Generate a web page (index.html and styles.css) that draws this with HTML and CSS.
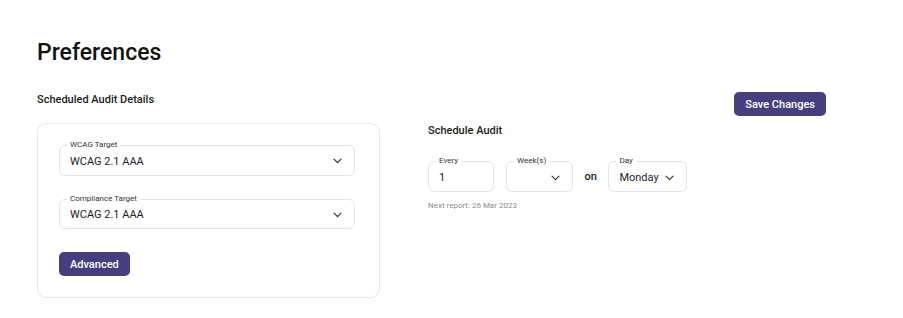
FILE: index.html
```html
<!DOCTYPE html>
<html lang="en">
  <head>
    <meta charset="UTF-8" />
    <meta name="viewport" content="width=device-width, initial-scale=1.0" />
    <link rel="stylesheet" href="styles.css">
  </head>
  <body>
    <div id="page">
      <h1 class="page-title">Preferences</h1>

      <div class="columns">
        <div class="col-left">
          <h2 class="section-title">Scheduled Audit Details</h2>
          <div class="card">
            <div class="field select-field wide">
              <span class="field-label">WCAG Target</span>
              <span class="field-value">WCAG 2.1 AAA</span>
              <svg class="chevron" width="9" height="6" viewBox="0 0 9 6"><path d="M1 1.2l3.5 3.5 3.5-3.5" fill="none" stroke="#333" stroke-width="1.2" stroke-linecap="round" stroke-linejoin="round"/></svg>
            </div>
            <div class="field select-field wide">
              <span class="field-label">Compliance Target</span>
              <span class="field-value">WCAG 2.1 AAA</span>
              <svg class="chevron" width="9" height="6" viewBox="0 0 9 6"><path d="M1 1.2l3.5 3.5 3.5-3.5" fill="none" stroke="#333" stroke-width="1.2" stroke-linecap="round" stroke-linejoin="round"/></svg>
            </div>
            <button class="btn">Advanced</button>
          </div>
        </div>

        <div class="col-right">
          <button class="btn save-btn">Save Changes</button>
          <h2 class="section-title schedule-title">Schedule Audit</h2>
          <div class="schedule-row">
            <div class="field every">
              <span class="field-label">Every</span>
              <span class="field-value">1</span>
            </div>
            <div class="field select-field weeks">
              <span class="field-label">Week(s)</span>
              <span class="field-value"></span>
              <svg class="chevron" width="9" height="6" viewBox="0 0 9 6"><path d="M1 1.2l3.5 3.5 3.5-3.5" fill="none" stroke="#333" stroke-width="1.2" stroke-linecap="round" stroke-linejoin="round"/></svg>
            </div>
            <span class="on-text">on</span>
            <div class="field select-field day">
              <span class="field-label">Day</span>
              <span class="field-value">Monday</span>
              <svg class="chevron" width="9" height="6" viewBox="0 0 9 6"><path d="M1 1.2l3.5 3.5 3.5-3.5" fill="none" stroke="#333" stroke-width="1.2" stroke-linecap="round" stroke-linejoin="round"/></svg>
            </div>
          </div>
          <p class="next-report">Next report: 26 Mar 2023</p>
        </div>
      </div>
    </div>
  </body>
</html>
```

FILE: styles.css
```css
body {
  font-family: "Roboto", "Liberation Sans", sans-serif;
  background-color: #fff;
  color: #1d1d1f;
  margin: 0;
  padding: 0;
}

#page {
  padding: 39px 37px 0 37px;
  width: 789px;
}

.page-title {
  margin: 0;
  font-size: 23px;
  line-height: 28px;
  font-weight: 500;
  color: #111;
}

.columns {
  display: flex;
  gap: 48px;
  margin-top: 25px;
}

.col-left {
  width: 343px;
}

.col-right {
  flex: 1;
  display: flex;
  flex-direction: column;
}

.section-title {
  margin: 0;
  font-size: 11px;
  line-height: 16px;
  font-weight: 500;
  color: #222;
}

.card {
  margin-top: 15px;
  box-sizing: border-box;
  width: 343px;
  height: 175px;
  border: 1.5px solid #e6e6ea;
  border-radius: 9px;
  padding: 21px;
  display: flex;
  flex-direction: column;
  gap: 23px;
  align-items: flex-start;
}

.field {
  position: relative;
  box-sizing: border-box;
  height: 31px;
  border: 1.5px solid #e3e3e8;
  border-radius: 6px;
  display: flex;
  align-items: center;
  padding: 2px 12px 0 10px;
}

.field-label {
  position: absolute;
  top: -6px;
  left: 7px;
  padding: 0 3px;
  background: #fff;
  font-size: 8px;
  line-height: 10px;
  color: #333;
}

.field-value {
  flex: 1;
  font-size: 11px;
  color: #1d1d1f;
}

.chevron {
  flex: none;
}

.wide {
  width: 296px;
}

.btn {
  font-family: inherit;
  border: none;
  background-color: #463f7f;
  color: #fff;
  font-size: 11px;
  font-weight: 500;
  border-radius: 5px;
  height: 24px;
  padding: 0 11px;
  cursor: pointer;
}

.save-btn {
  align-self: flex-end;
  margin-top: 0;
}

.schedule-title {
  margin-top: 7px;
}

.schedule-row {
  display: flex;
  align-items: center;
  gap: 11.5px;
  margin-top: 22px;
}

.every {
  width: 66px;
  margin-right: 0.5px;
}

.weeks {
  width: 67px;
}

.day {
  width: 79px;
}

.on-text {
  font-size: 11px;
  font-weight: 500;
}

.next-report {
  margin: 9px 0 0 0;
  font-size: 8px;
  color: #8a8a8e;
}
```
